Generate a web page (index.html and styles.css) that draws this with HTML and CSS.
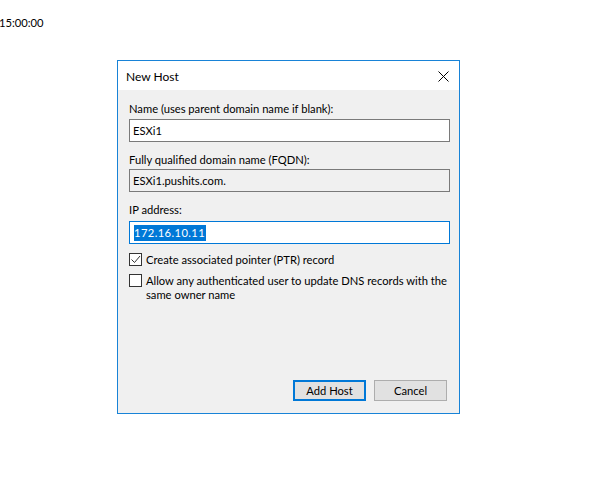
FILE: index.html
```html
<!DOCTYPE html>
<html>
<head>
<meta charset="utf-8">
<link rel="stylesheet" href="styles.css">
</head>
<body>
<div class="stamp">15:00:00</div>
<div class="dialog">
  <div class="titlebar">
    <span class="title">New Host</span>
    <svg class="close" width="11" height="11" viewBox="0 0 11 11"><path d="M0.5 0.5 L10.5 10.5 M10.5 0.5 L0.5 10.5" stroke="#000" stroke-width="1"/></svg>
  </div>
  <div class="content">
    <div class="label">Name (uses parent domain name if blank):</div>
    <div class="field">ESXi1</div>
    <div class="label">Fully qualified domain name (FQDN):</div>
    <div class="field readonly">ESXi1.pushits.com.</div>
    <div class="label">IP address:</div>
    <div class="field focused"><span class="sel">172.16.10.11</span></div>
    <div class="check first">
      <span class="box"><svg width="11" height="11" viewBox="0 0 11 11"><path d="M1.5 5.5 L4.5 8.5 L10 2" fill="none" stroke="#333" stroke-width="1"/></svg></span>
      <span class="ctext">Create associated pointer (PTR) record</span>
    </div>
    <div class="check">
      <span class="box"></span>
      <span class="ctext">Allow any authenticated user to update DNS records with the same owner name</span>
    </div>
    <div class="buttons">
      <div class="btn default">Add Host</div>
      <div class="btn">Cancel</div>
    </div>
  </div>
</div>
</body>
</html>
```
FILE: styles.css
```css
html, body {
  margin: 0;
  padding: 0;
  background: #fff;
}
body {
  font-family: Lato, "Liberation Sans", sans-serif;
  font-size: 11.2px;
  color: #000;
}
.stamp {
  height: 14px;
  line-height: 14px;
  padding-top: 16px;
  margin-left: -1px;
}
.dialog {
  box-sizing: border-box;
  margin-left: 117px;
  margin-top: 30px;
  width: 343px;
  height: 354px;
  border: 1px solid #1883d7;
  background: #f0f0f0;
  display: flex;
  flex-direction: column;
}
.titlebar {
  height: 29px;
  background: #fff;
  display: flex;
  align-items: center;
  justify-content: space-between;
  padding: 0 10px 0 8px;
}
.title {
  font-size: 12px;
  padding-top: 1px;
}
.close {
  display: block;
  margin-top: 1px;
}
.content {
  flex: 1;
  padding: 11px 9px 12px 11px;
  display: flex;
  flex-direction: column;
}
.label {
  line-height: 15px;
  height: 15px;
}
.field {
  box-sizing: border-box;
  height: 23px;
  margin-top: 3px;
  margin-bottom: 10px;
  border: 1px solid #7a7a7a;
  background: #fff;
  padding: 0 3px;
  line-height: 21px;
}
.field.readonly {
  background: #f0f0f0;
  margin-top: 2px;
}
.field.focused {
  border-color: #0078d7;
  margin-top: 4px;
  margin-bottom: 9px;
  padding-left: 4px;
  display: flex;
  align-items: center;
}
.sel {
  background: #0078d7;
  color: #fff;
  line-height: 16px;
  padding-right: 1px;
  letter-spacing: 0.4px;
}
.check {
  display: flex;
  align-items: flex-start;
  gap: 4px;
  line-height: 14px;
}
.check.first {
  margin-bottom: 7px;
}
.box {
  box-sizing: border-box;
  flex: none;
  width: 13px;
  height: 13px;
  border: 1px solid #333;
  background: #fff;
  display: flex;
  align-items: center;
  justify-content: center;
}
.ctext {
  width: 304px;
}
.buttons {
  margin-top: auto;
  display: flex;
  justify-content: flex-end;
  gap: 8px;
  padding-right: 3px;
}
.btn {
  box-sizing: border-box;
  width: 73px;
  height: 21px;
  border: 1px solid #adadad;
  background: #e1e1e1;
  text-align: center;
  line-height: 19px;
}
.btn.default {
  border: 2px solid #0078d7;
  line-height: 17px;
}
```
